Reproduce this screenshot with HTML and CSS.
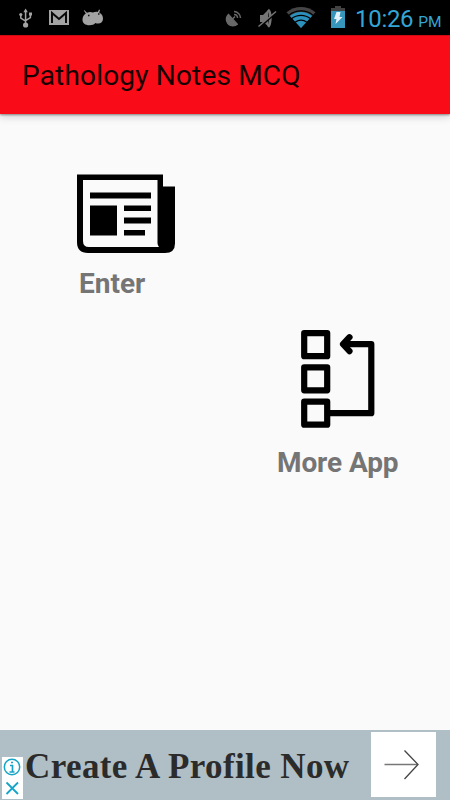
FILE: index.html
```html
<!DOCTYPE html>
<html lang="en">
<head>
<meta charset="utf-8">
<title>Pathology Notes MCQ</title>
<link rel="stylesheet" href="styles.css">
</head>
<body>
<div class="screen">
  <div class="status">
    <svg width="331" height="35" viewBox="0 0 331 35" aria-hidden="true">
      <g fill="none" stroke="#a3a3a3" stroke-width="1.5">
        <path d="M25.600 11V24M20.800 14.500v3.700l4.800 3M30.400 14v3.700l-4.800 3"/>
      </g>
      <g fill="#a3a3a3">
        <path d="M25.600 8.500l2.200 3.700h-4.400z"/><circle cx="25.600" cy="25" r="2.600"/><circle cx="20.800" cy="14.500" r="1.600"/><path d="M29 12.500h3v3h-3z"/>
        <path d="M49 10h20v15H49z"/>
        <path d="M84.500 10.200l2.500 2.500c2-1 4-1 6-.2 1.800-.8 3.200-.9 4.800-.6l1.200-2.400 1 .4-.8 2.600c2.600 1.300 3.800 3.600 3.800 6.300 0 3.200-2 4.800-4.800 4.800-1.200 0-2-.1-2.800-.5-1.200 1.500-3.200 2.200-5.900 2.200-4.500 0-7-2.200-7-5.500 0-2.500 1-4.700 3.300-6.200l-2-3z"/>
      </g>
      <path d="M52 23V13l7 6 7-6v10" fill="none" stroke="#090909" stroke-width="2"/>
      <path d="M88 15.500h1.500M98 14h1.500" stroke="#111" stroke-width="1.500"/>
      <g fill="none" stroke="#686868" stroke-width="1.500">
        <path d="M228.500 14.500c-4 4-1.500 11 4 11.300 2 .1 3.700-.6 4.700-1.600z" fill="#686868"/>
        <path d="M232.500 19l2.500-2.500M234 14.500c2 0 3.500 1.500 3.500 3.500M234 11.500c3.500 0 6.500 3 6.500 6.500"/>
      </g>
      <g fill="none" stroke="#757575">
        <path d="M260 15h3l5-5v16l-5-4h-3z" fill="#757575" stroke="none"/>
        <path d="M268 9.800c3 2 3 14 0 17" stroke-width="2.800"/>
        <path d="M259.500 27.500l17.500-16" stroke="#000" stroke-width="2"/>
        <path d="M258.500 26.500l17.500-15" stroke-width="1.500"/>
      </g>
      <path d="M286.500 12.300c8.500-7.200 20.500-7.200 29 0l-14.500 15.700z" fill="#454545"/>
      <path d="M290 16c6.500-5.500 15.500-5.500 22 0L301 28z" fill="#2b91bd"/>
      <g fill="none" stroke="#000" stroke-width="1.200"><path d="M288.800 15.400c7-6 17.400-6 24.400 0M291.500 18.800c5.500-4.600 13.500-4.600 19 0M295 22.300c3.700-2.800 8.300-2.800 12 0"/></g>
    </svg>
    <svg class="battery" width="14" height="22" viewBox="0 0 14 22" aria-hidden="true">
      <path d="M0 2h4V0h6v2h4v4H0z" fill="#434343"/><path d="M0 5h14v17H0z" fill="#3796bc"/><path d="M5.500 6h4l-1 5h3l-7 7 1-5H3z" fill="#e2f2f8"/>
    </svg>
    <div class="clock"><span class="time">10:26</span><span class="ampm">PM</span></div>
  </div>
  <header class="bar"><h1 class="title">Pathology Notes MCQ</h1></header>
  <main class="content">
    <div class="item enter">
      <svg width="98" height="80" viewBox="0 0 98 80" aria-hidden="true">
        <path fill-rule="evenodd" d="M0 .5h86v12h12v57q0 9.500-10 9.500H11Q0 79 0 68zM6 6V67q0 6 6 6h70q-1.500-1.500-1.500-4V6z"/>
        <path d="M13 18.500h61v6H13zM13 31.500h27v30H13zM47 31.500h27v5.500H47zM47 43.500h27v6H47zM47 56h21v5.500H47z"/>
      </svg>
      <div class="label">Enter</div>
    </div>
    <div class="item more">
      <svg width="74" height="99" viewBox="0 0 74 99" aria-hidden="true">
        <g fill="none" stroke="#000" stroke-width="6.200" stroke-linejoin="round">
          <path d="M3.200 3.200h23v23h-23zM3.200 37.300h23v23h-23zM3.200 71.700h23v23h-23zM29 83.200h41.300V14.200H43"/>
          <path d="M48.500 7.200l-6.500 7 6.500 7" stroke-linecap="round"/>
        </g>
      </svg>
      <div class="label">More App</div>
    </div>
  </main>
  <footer class="ad">
    <div class="choices">
      <svg width="21" height="42" viewBox="0 0 21 42" fill="none" stroke="#16a5c6" aria-hidden="true">
        <circle cx="10" cy="10" r="7.700" stroke-width="1.500"/><path d="M8 8.500h2.500V15M7.500 15h5M9 5.500h2" stroke-width="1.700"/><path d="M4.500 25.500l11.500 11.500M16 25.500L4.500 37" stroke-width="1.800"/>
      </svg>
    </div>
    <div class="headline">Create A Profile Now</div>
    <div class="go">
      <svg width="65" height="65" viewBox="0 0 65 65" fill="none" aria-hidden="true">
        <path d="M13.500 32.500H46" stroke="#777" stroke-width="1.300"/><path d="M33.500 18.500l13.500 14-13.500 14.500" stroke="#444" stroke-width="1.300"/>
      </svg>
    </div>
  </footer>
</div>
</body>
</html>
```
FILE: styles.css
```css
* { box-sizing: border-box; }
body { margin: 0; font-family: Roboto, sans-serif; }
svg { display: block; flex: none; }
.screen { width: 450px; height: 800px; display: flex; flex-direction: column; background: #fafafa; overflow: hidden; }
.status { height: 35px; flex: none; display: flex; background: #000; }
.battery { margin-top: 6px; }
.clock { display: flex; align-items: baseline; margin-left: 10px; color: #33a6d6; line-height: 38px; white-space: nowrap; }
.time { font-size: 24px; letter-spacing: -0.3px; }
.ampm { font-size: 15.5px; margin-left: 5px; }
.bar { height: 79px; flex: none; display: flex; align-items: center; padding: 2px 0 0 22px; background: #f90c17; border-top: 1px solid #d20a12; box-shadow: 0 1px 2px rgba(0,0,0,.4), 0 3px 8px rgba(0,0,0,.16); }
.title { margin: 0; font-size: 28px; font-weight: 400; line-height: 36px; letter-spacing: 0.18px; color: #170003; white-space: nowrap; }
.content { flex: 1; display: flex; flex-direction: column; align-items: flex-start; padding-top: 60px; }
.item { display: flex; flex-direction: column; align-items: flex-start; }
.enter { margin-left: 77px; }
.enter .label { margin: 13px 0 0 2px; }
.more { margin: 29px 0 0 277px; }
.more svg { margin-left: 24px; }
.more .label { margin-top: 17px; letter-spacing: -0.1px; }
.label { font-size: 28px; line-height: 34px; font-weight: 700; color: #757575; white-space: nowrap; }
.ad { height: 70px; flex: none; display: flex; background: #b0bec5; }
.choices { width: 21px; height: 42px; margin: 27px 0 0 2px; background: #fff; }
.headline { width: 346px; margin-left: 2px; line-height: 74px; font-family: "Liberation Serif", serif; font-weight: 700; font-size: 35px; letter-spacing: 0.4px; color: #2b2b2b; white-space: nowrap; }
.go { width: 65px; height: 65px; margin-top: 2px; background: #fff; }
```
